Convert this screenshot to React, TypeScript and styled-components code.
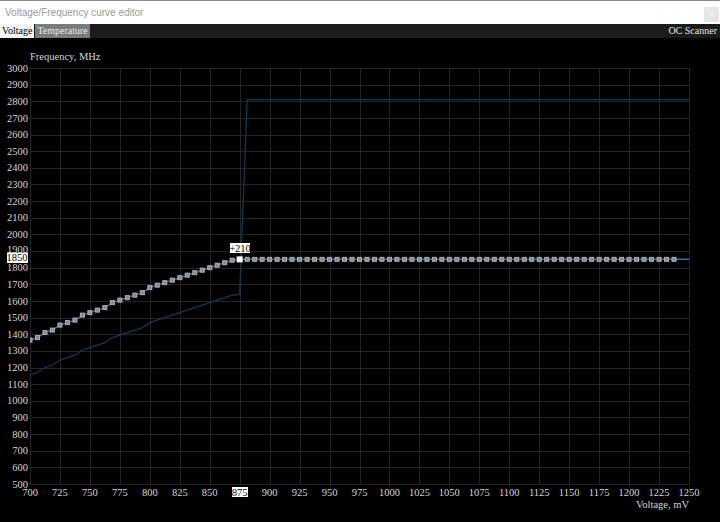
import React from "react";
import styled, { createGlobalStyle } from "styled-components";

const GlobalStyle = createGlobalStyle`
  html, body { margin: 0; padding: 0; background: #000; overflow: hidden; }
  #root { width: 720px; height: 522px; }
`;

const Window = styled.div`
  width: 720px;
  height: 522px;
  display: flex;
  flex-direction: column;
  background: #000;
`;

const TitleBar = styled.div`
  height: 23px;
  flex: none;
  background: #ffffff;
  border-top: 1px solid #8c8c8c;
  display: flex;
  align-items: center;
  justify-content: space-between;
  padding: 0 1px 0 5px;
`;

const TitleText = styled.span`
  font-family: "Liberation Sans", Arial, sans-serif;
  font-size: 10px;
  color: #9a9a9a;
  margin-top: -1px;
`;

const CloseButton = styled.div`
  width: 15px;
  height: 15px;
  margin-top: 3px;
  background: #e6e6e6;
  color: #f6f6f6;
  font-family: "Liberation Sans", Arial, sans-serif;
  font-size: 10px;
  line-height: 15px;
  text-align: center;
`;

const TabBar = styled.div`
  height: 14px;
  flex: none;
  background: #1b1b1b;
  display: flex;
  align-items: stretch;
  font-family: "Liberation Serif", "Times New Roman", serif;
  font-size: 10px;
  line-height: 14px;
`;

const Tab = styled.div<{ $active?: boolean }>`
  padding: 0 2px 0 2px;
  background: ${(p) => (p.$active ? "#f4f4f4" : "#7b7b7b")};
  color: ${(p) => (p.$active ? "#000" : "#e8e8e8")};
  margin-right: ${(p) => (p.$active ? "1px" : "0")};
`;

const TabSpacer = styled.div`
  flex: 1;
`;

const SideLink = styled.div`
  color: #e2e2e2;
  padding-right: 3px;
`;

const ChartArea = styled.div`
  flex: 1;
  background: #000;
  display: flex;
`;

const ChartSvg = styled.svg`
  display: block;
`;

const GridLine = styled.line`
  stroke: #252525;
  stroke-width: 1;
`;

const AxisLabel = styled.text<{ $dark?: boolean }>`
  font-family: "Liberation Serif", "Times New Roman", serif;
  font-size: 10.5px;
  fill: ${(p) => (p.$dark ? "#000" : "#d6d6d6")};
`;

const HighlightBox = styled.rect`
  fill: #ffffff;
`;

const BaseCurve = styled.polyline`
  fill: none;
  stroke: #0e3a58;
  stroke-width: 1.3;
`;

const PointCurve = styled.polyline`
  fill: none;
  stroke: #1f74b2;
  stroke-width: 1.5;
`;

const CurvePoint = styled.rect`
  fill: #8a8a8a;
  stroke: #b0b0b0;
  stroke-width: 1;
`;

const SelectedPoint = styled.rect`
  fill: #ffffff;
`;

const X = (v: number) => 30 + ((v - 700) * 659) / 550;
const Y = (f: number) => 68 + ((3000 - f) * 416) / 2500;

const rising = [
  1365, 1380, 1410, 1425, 1455, 1470, 1485, 1515, 1530, 1545, 1560, 1590,
  1605, 1620, 1635, 1650, 1680, 1695, 1710, 1725, 1740, 1755, 1770, 1785,
  1800, 1815, 1830, 1845, 1850,
];

const points = Array.from({ length: 87 }, (_, i) => {
  const v = 700 + i * 6.25;
  const f = i < rising.length ? rising[i] : 1850;
  return { v, f, x: X(v), y: Y(f) };
});

const basePts: [number, number][] = [];
for (let i = 0; i <= 28; i++) {
  basePts.push([X(700 + i * 6.25), Y(rising[i] - 210)]);
}
basePts.push([X(881.25), Y(2810)]);
basePts.push([X(1250), Y(2810)]);

const voltTicks = Array.from({ length: 23 }, (_, i) => 700 + i * 25);
const freqTicks = Array.from({ length: 26 }, (_, i) => 500 + i * 100);

export default function App() {
  const selIdx = 28;
  const sel = points[selIdx];
  const line = [...points.map((p) => `${p.x},${p.y}`), `${X(1250)},${Y(1850)}`].join(" ");
  return (
    <>
      <GlobalStyle />
      <Window>
        <TitleBar>
          <TitleText>Voltage/Frequency curve editor</TitleText>
          <CloseButton>×</CloseButton>
        </TitleBar>
        <TabBar>
          <Tab $active>Voltage</Tab>
          <Tab>Temperature</Tab>
          <TabSpacer />
          <SideLink>OC Scanner</SideLink>
        </TabBar>
        <ChartArea>
          <ChartSvg width={720} height={484} viewBox="0 38 720 484">
            <defs>
              <clipPath id="plot">
                <rect x={30} y={60} width={660} height={425} />
              </clipPath>
            </defs>
            {voltTicks.map((v) => {
              const x = Math.round(X(v)) + 0.5;
              return <GridLine key={`v${v}`} x1={x} x2={x} y1={68} y2={485} />;
            })}
            {freqTicks.map((f) => {
              const y = Math.round(Y(f)) + 0.5;
              return <GridLine key={`h${f}`} x1={30} x2={690} y1={y} y2={y} />;
            })}

            <AxisLabel x={30} y={60}>Frequency, MHz</AxisLabel>
            <AxisLabel x={689} y={508} textAnchor="end">Voltage, mV</AxisLabel>

            {freqTicks.map((f) => (
              <AxisLabel key={`fl${f}`} x={28} y={Y(f) + (f === 1900 ? 1.5 : 3.6)} textAnchor="end">
                {f}
              </AxisLabel>
            ))}
            <HighlightBox x={7} y={252.5} width={21} height={10.5} />
            <AxisLabel $dark x={27.5} y={261} textAnchor="end">1850</AxisLabel>

            {voltTicks.map((v) =>
              v === 875 ? null : (
                <AxisLabel key={`vl${v}`} x={X(v)} y={496} textAnchor="middle">{v}</AxisLabel>
              )
            )}
            <HighlightBox x={232} y={487} width={16} height={10} />
            <AxisLabel $dark x={X(875)} y={496} textAnchor="middle">875</AxisLabel>

            <g clipPath="url(#plot)">
              <BaseCurve points={basePts.map((p) => p.join(",")).join(" ")} />
              <PointCurve points={line} />
              {points.map((p, i) =>
                i === selIdx ? null : (
                  <CurvePoint key={i} x={p.x - 2} y={p.y - 2} width={4} height={4} />
                )
              )}
              <SelectedPoint x={sel.x - 3} y={sel.y - 3} width={6} height={6} />
            </g>

            <HighlightBox x={230} y={243} width={20} height={10} />
            <AxisLabel $dark x={240} y={251.5} textAnchor="middle">+210</AxisLabel>
          </ChartSvg>
        </ChartArea>
      </Window>
    </>
  );
}
